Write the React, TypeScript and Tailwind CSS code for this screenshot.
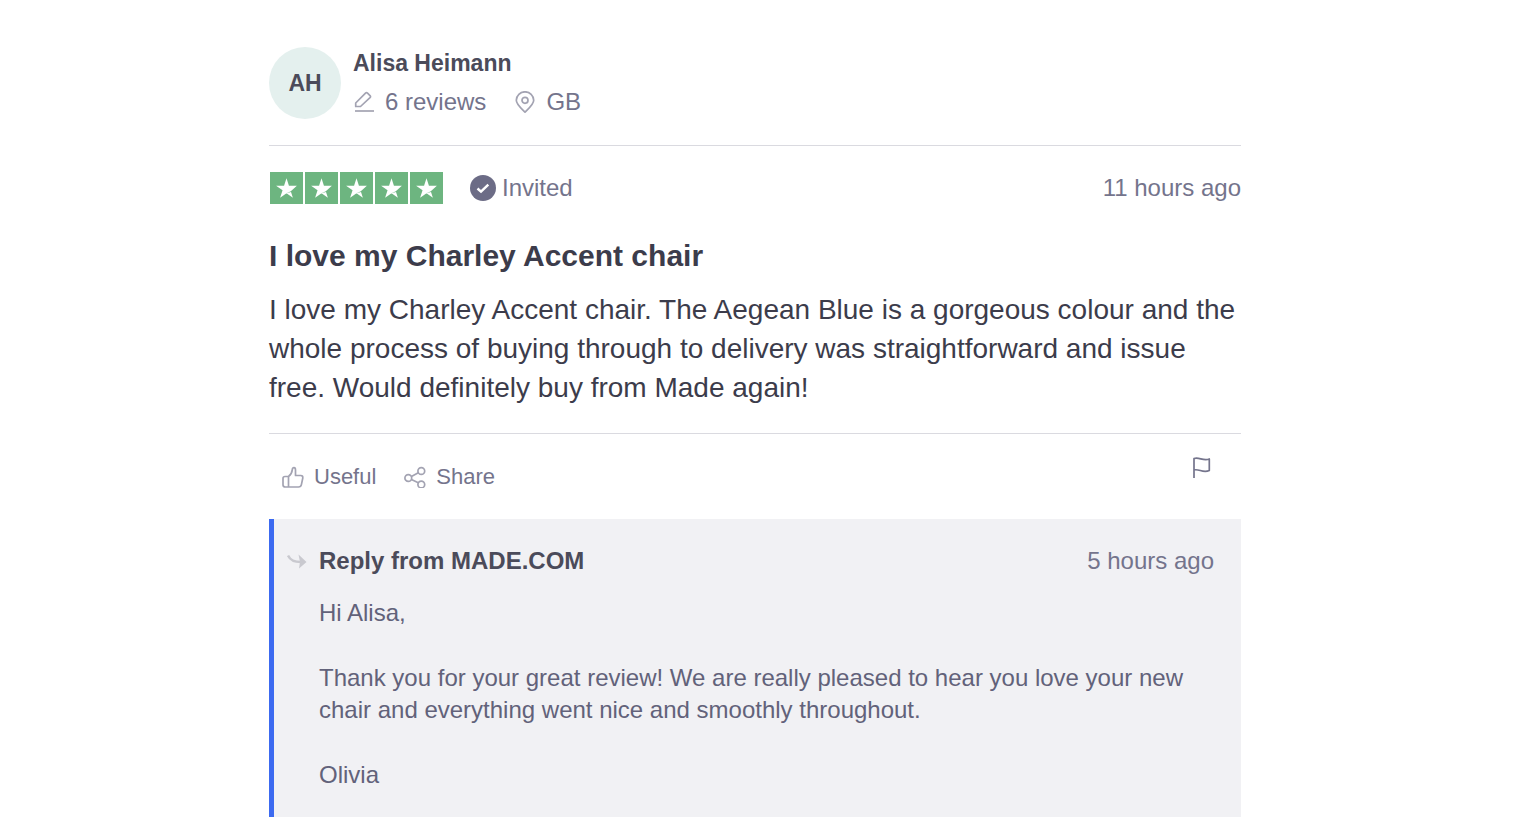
import type { ReactNode } from "react";

type IconProps = {
    className: string;
    children: ReactNode;
};

const review = {
    initials: "AH",
    author: "Alisa Heimann",
    country: "GB",
    rating: 5,
    title: "I love my Charley Accent chair",
    text: "I love my Charley Accent chair. The Aegean Blue is a gorgeous colour and the whole process of buying through to delivery was straightforward and issue free. Would definitely buy from Made again!",
};

const reply = [
    "Hi Alisa,",
    "Thank you for your great review! We are really pleased to hear you love your new chair and everything went nice and smoothly throughout.",
    "Olivia",
];

const Icon = ({ className, children }: IconProps) => (
    <svg
        viewBox="0 0 22 22"
        fill="none"
        stroke="currentColor"
        strokeWidth="1.7"
        strokeLinejoin="round"
        className={`shrink-0 ${className}`}
        aria-hidden="true"
    >
        {children}
    </svg>
);

const Stars = ({ count }: { count: number }) => (
    <div className="flex gap-0.5 pl-px" role="img" aria-label={`Rated ${count} out of 5 stars`}>
        {Array.from({ length: count }, (_, i) => (
            <span key={i} className="flex h-8 w-[33px] items-center justify-center bg-[#6db580]">
                <svg viewBox="14 16 68 64" fill="#fff" className="h-5 w-[21px]">
                    <path d="M48 64.7L62.6 61l6.1 18.8zm33.6-24.3H55.9L48 16.2l-7.9 24.2H14.4l20.8 15-7.9 24.2 20.8-15 13.8-5.700z" />
                </svg>
            </span>
        ))}
    </div>
);

const App = () => {
    return (
        <div className="min-h-screen bg-white pt-[47px] pr-5 pl-4 font-['Liberation_Sans',Arial,sans-serif] text-2xl leading-8 text-[#74748c]">
            <article className="mx-auto max-w-[972px]">
                <header className="flex gap-3 border-b border-[#dadae0] pb-[26px]">
                    <div className="flex size-[72px] shrink-0 items-center justify-center rounded-full bg-[#e4f0ee] text-[23px] font-bold text-[#4b4b5a]">
                        {review.initials}
                    </div>
                    <div className="flex flex-col gap-[7px]">
                        <h3 className="text-[23px] leading-8 font-bold text-[#4b4b5a]">{review.author}</h3>
                        <div className="flex gap-7">
                            <span className="flex items-center gap-2.5">
                                <Icon className="size-[22px] text-[#a3a3b2]">
                                    <path d="M2 20h19" />
                                    <path d="M2.700 15.500v-3.500L12.500 2.200q1-1 2 0l2.500 2.500q1 1 0 2L7.500 15.500z" />
                                </Icon>
                                6 reviews
                            </span>
                            <span className="flex items-center gap-2.5">
                                <Icon className="size-[22px] text-[#a3a3b2]">
                                    <path d="M11 21.200C8 18 2.300 13.500 2.300 9.300a8.700 8.500 0 0 1 17.400 0c0 4.200-5.700 8.700-8.700 11.900z" />
                                    <circle cx="11" cy="9.300" r="3" />
                                </Icon>
                                {review.country}
                            </span>
                        </div>
                    </div>
                </header>

                <section className="border-b border-[#dadae0] pt-[26px] pb-[25px] text-[#3c3c4b]">
                    <div className="flex items-center justify-between text-[#74748c]">
                        <div className="flex items-center gap-[27px]">
                            <Stars count={review.rating} />
                            <span className="flex items-center gap-1.5">
                                <svg viewBox="0 0 26 26" className="size-[26px]" aria-hidden="true">
                                    <circle cx="13" cy="13" r="13" fill="#6c6c86" />
                                    <path d="M7.500 13.500l3.500 3.200 7.300-7" fill="none" stroke="#fff" strokeWidth="2.400" />
                                </svg>
                                Invited
                            </span>
                        </div>
                        <time>11 hours ago</time>
                    </div>
                    <h2 className="mt-[34px] text-[30px] leading-9 font-bold">{review.title}</h2>
                    <p className="mt-4 mb-px text-[28px] leading-[39px]">{review.text}</p>
                </section>

                <div className="flex items-start justify-between pt-[23px] pr-7 pb-[26px] pl-[13px]">
                    <div className="flex gap-7 pt-1 text-[22px] leading-8">
                        <button type="button" className="flex cursor-pointer items-center gap-2.5">
                            <Icon className="size-[22px] text-[#a3a3b2]">
                                <path d="M6.500 10.500v10.500M6.500 10.500h-3.500Q1 10.500 1 12.500v6.200q0 2.300 2.300 2.300h13.200q2.500 0 2.900-2.300l1.400-6.700q.2-2.500-2-2.500h-5.300V4q0-2.400-1.500-2.400T10.300 3.600C10 7 8.500 9 6.500 10.500" />
                            </Icon>
                            Useful
                        </button>
                        <button type="button" className="flex cursor-pointer items-center gap-2.5">
                            <Icon className="size-[22px] text-[#a3a3b2]">
                                <circle cx="4.300" cy="12" r="3.400" />
                                <circle cx="17.300" cy="5" r="3.400" />
                                <circle cx="17.300" cy="18.500" r="3.400" />
                                <path d="M7.400 10.500l6.900-3.800M7.400 13.500l6.900 3.300" />
                            </Icon>
                            Share
                        </button>
                    </div>
                    <button type="button" aria-label="Report review" className="cursor-pointer">
                        <Icon className="size-[22px]">
                            <path d="M3 21V1.500C8-.5 12 4.500 18.300 2v11.500C12 16.500 8 11.500 3 13" />
                        </Icon>
                    </button>
                </div>

                <section className="flex gap-3 border-l-[5px] border-[#3c6af0] bg-[#f1f1f4] pt-[26px] pr-[27px] pb-[26px] pl-[13px]">
                    <svg viewBox="0 0 20 16" className="mt-2 h-4 w-5 shrink-0 text-[#c9c9cf]" aria-hidden="true">
                        <path d="M1 2.500C3.500 8 8 9.500 16 9" fill="none" stroke="currentColor" strokeWidth="2.500" />
                        <path d="M11.500 1.500L19.500 9l-7.500 6.500 1-6.500z" fill="currentColor" />
                    </svg>
                    <div className="grow">
                        <div className="flex justify-between">
                            <h3 className="font-bold text-[#4b4b5a]">Reply from MADE.COM</h3>
                            <time>5 hours ago</time>
                        </div>
                        <div className="mt-5 flex flex-col gap-[33px] text-[#62627a]">
                            {reply.map((line) => (
                                <p key={line}>{line}</p>
                            ))}
                        </div>
                    </div>
                </section>
            </article>
        </div>
    );
};

export default App;
